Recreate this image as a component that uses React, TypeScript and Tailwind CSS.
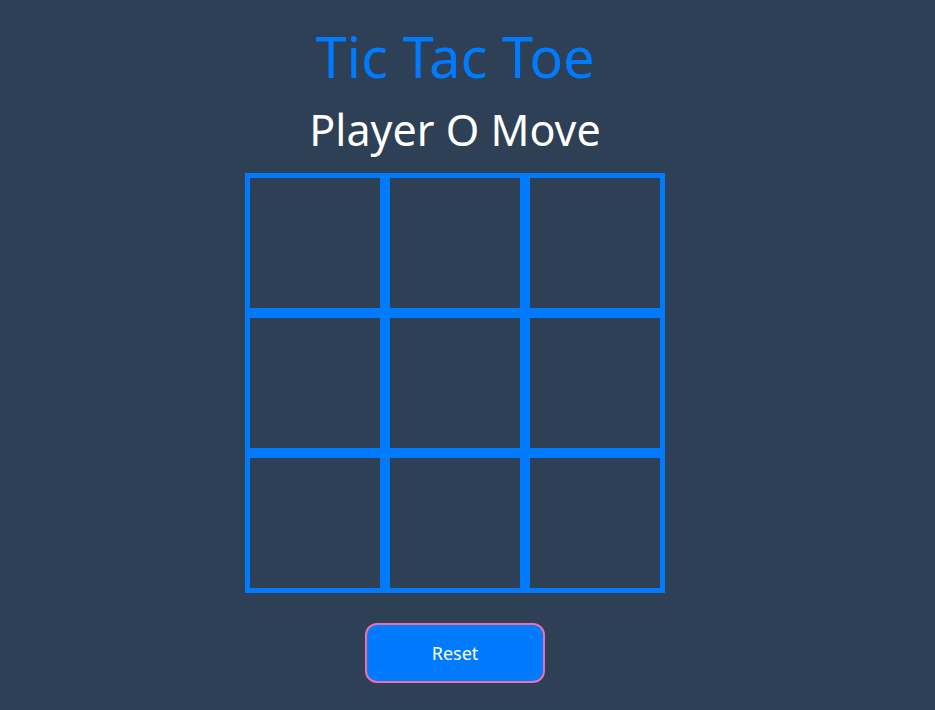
import React, { useState } from "react";

export default function App() {
  const [board, setBoard] = useState<(string | null)[]>(Array(9).fill(null));
  const [player, setPlayer] = useState<"X" | "O">("O");

  const click = (i: number) => {
    if (board[i]) return;
    const b = board.slice();
    b[i] = player;
    setBoard(b);
    setPlayer(player === "X" ? "O" : "X");
  };

  return (
    <div
      className="min-h-[710px] w-full bg-[#2e4055] flex flex-col items-center pr-[25px]"
      style={{ fontFamily: '"Noto Sans", "Open Sans", sans-serif' }}
    >
      <h1 className="mt-[21px] text-[56px] leading-[70px] text-[#007bff] font-normal">Tic Tac Toe</h1>
      <h2 className="mt-[12px] text-[43px] leading-[54px] text-white font-normal">Player {player} Move</h2>
      <div className="mt-[16px] grid grid-cols-[140px_140px_140px] grid-rows-[140px_140px_140px]">
        {board.map((v, i) => (
          <button
            key={i}
            onClick={() => click(i)}
            className="border-[5px] border-[#007bff] bg-transparent text-white text-[60px] flex items-center justify-center"
          >
            {v}
          </button>
        ))}
      </div>
      <button
        onClick={() => {
          setBoard(Array(9).fill(null));
          setPlayer("O");
        }}
        className="mt-[30px] w-[180px] h-[60px] rounded-[12px] border-2 border-[#f06eaa] bg-[#007bff] text-white text-[18px]"
      >
        Reset
      </button>
    </div>
  );
}
